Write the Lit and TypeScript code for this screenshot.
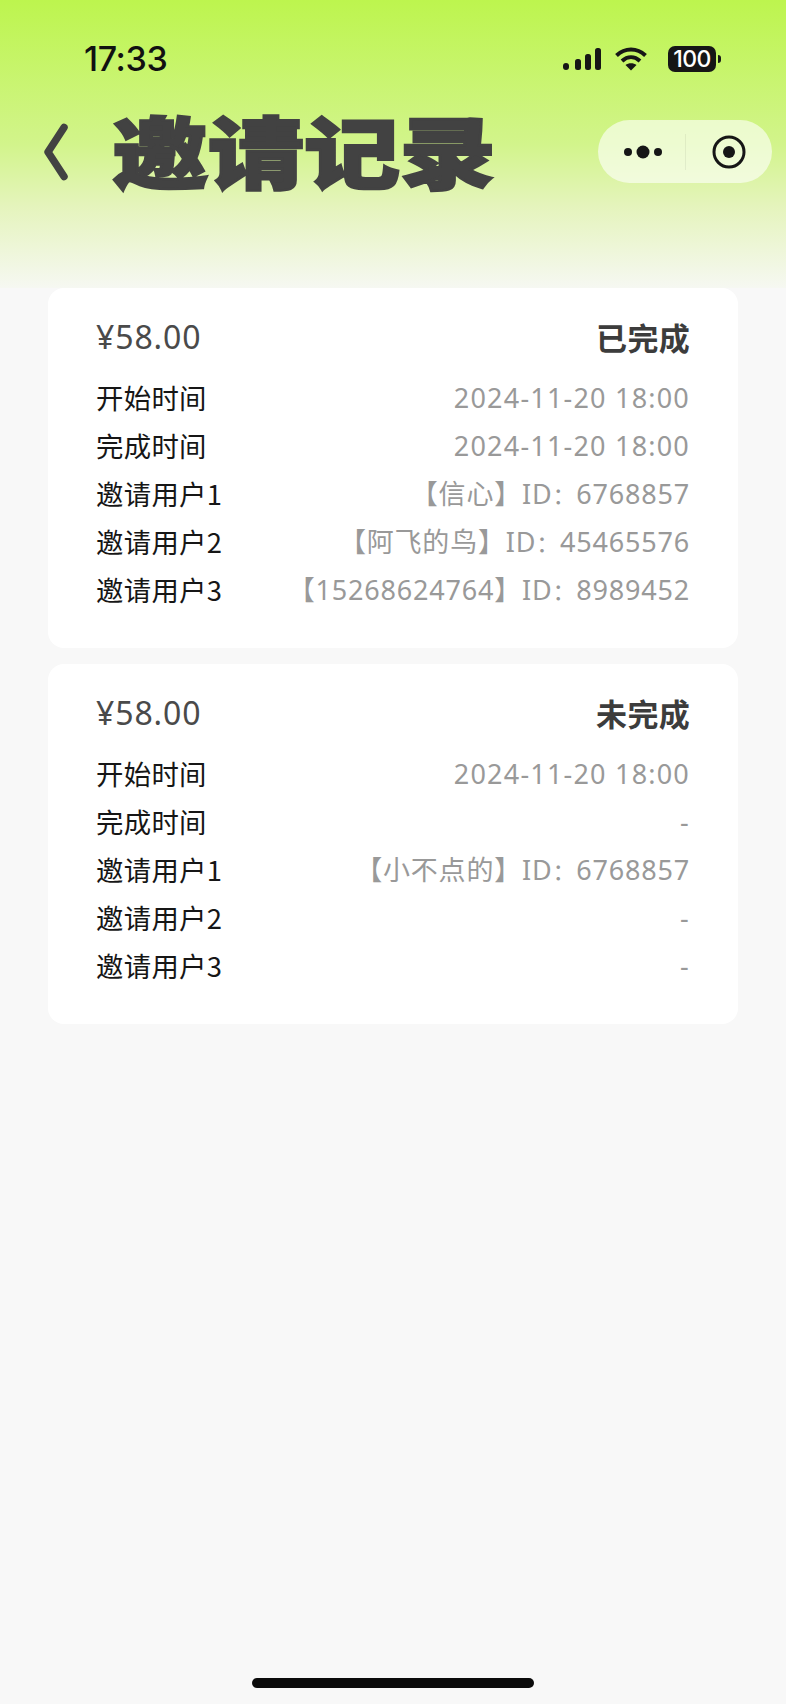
import { LitElement, html, css } from "lit";
import { customElement } from "lit/decorators.js";

type Row = [string, string];
const cards: { status: string; rows: Row[] }[] = [
  {
    status: "已完成",
    rows: [
      ["开始时间", "2024-11-20 18:00"],
      ["完成时间", "2024-11-20 18:00"],
      ["邀请用户1", "【信心】ID：6768857"],
      ["邀请用户2", "【阿飞的鸟】ID：45465576"],
      ["邀请用户3", "【15268624764】ID：8989452"],
    ],
  },
  {
    status: "未完成",
    rows: [
      ["开始时间", "2024-11-20 18:00"],
      ["完成时间", "-"],
      ["邀请用户1", "【小不点的】ID：6768857"],
      ["邀请用户2", "-"],
      ["邀请用户3", "-"],
    ],
  },
];

@customElement("app-root")
export class AppRoot extends LitElement {
  static styles = css`
    :host {
      display: block;
      position: relative;
      height: 1704px;
      overflow: hidden;
      background: #f8f8f8;
      font-family: "Noto Sans CJK SC", "Noto Sans", sans-serif;
    }
    .head {
      height: 288px;
      background: linear-gradient(180deg, #bdf54e 0%, #d2f48b 50%, #e5f4bd 72%, #f6f8f2 100%);
    }
    .status {
      display: flex;
      justify-content: space-between;
      align-items: center;
      height: 40px;
      padding: 39px 0 0 84px;
    }
    .time {
      font-family: Inter, sans-serif;
      font-size: 34px;
      font-weight: 500;
      line-height: 40px;
      color: #111;
      letter-spacing: -0.4px;
    }
    .sicons {
      display: flex;
      align-items: center;
      margin-right: 70px;
    }
    .sicons svg { display: block; }
    .batt {
      position: relative;
      width: 48px;
      height: 26px;
      margin-left: 21px;
      background: #161616;
      border-radius: 7px;
      color: #fff;
      font-family: Inter, sans-serif;
      font-size: 23px;
      font-weight: 500;
      line-height: 26px;
      text-align: center;
      letter-spacing: -0.6px;
    }
    .batt::after {
      content: "";
      position: absolute;
      right: -5px;
      top: 9px;
      width: 3px;
      height: 8px;
      border-radius: 0 3px 3px 0;
      background: #161616;
    }
    .nav {
      display: flex;
      align-items: center;
      height: 63px;
      margin-top: 41px;
      padding: 0 14px 0 44px;
    }
    .back { display: block; flex: none; }
    .title {
      flex: none;
      width: 384px;
      margin: -5px 0 0 40px;
      font-size: 78px;
      font-weight: 900;
      line-height: 63px;
      color: #424242;
      white-space: nowrap;
      -webkit-text-stroke: 2.5px #424242;
      transform: scaleX(1.23);
      transform-origin: left center;
    }
    .capsule {
      display: flex;
      align-items: center;
      width: 174px;
      height: 63px;
      margin-left: auto;
      border-radius: 32px;
      background: rgba(255, 255, 255, 0.6);
    }
    .capsule .half {
      flex: 1;
      display: flex;
      align-items: center;
      justify-content: center;
    }
    .dots { margin-left: 3px; }
    .sep { width: 1px; height: 36px; background: rgba(0, 0, 0, 0.06); }
    .list {
      display: flex;
      flex-direction: column;
      gap: 16px;
      padding: 0 48px;
    }
    .card {
      height: 360px;
      box-sizing: border-box;
      padding: 28px 48px 0;
      background: #fff;
      border-radius: 16px;
    }
    .top {
      display: flex;
      justify-content: space-between;
      align-items: flex-start;
      margin-bottom: 14px;
    }
    .price {
      font-family: "Noto Sans", sans-serif;
      font-size: 32px;
      line-height: 42px;
      color: #4a4a4a;
      letter-spacing: 0.9px;
    }
    .state {
      margin-top: -1px;
      font-size: 31px;
      font-weight: 700;
      line-height: 44px;
      color: #3c3c3c;
      letter-spacing: 0.3px;
    }
    .row {
      display: flex;
      justify-content: space-between;
      height: 48px;
      font-size: 27.4px;
      line-height: 48px;
    }
    .k { color: #161616; letter-spacing: 0.3px; }
    .v {
      position: relative;
      top: 1px;
      color: #999;
      font-size: 27px;
      letter-spacing: 0.8px;
      font-family: "Noto Sans", "Noto Sans CJK SC", sans-serif;
    }
    .v.date { letter-spacing: 1.2px; }
    .colon { font-size: 23px; }
    .home {
      position: absolute;
      left: 252px;
      bottom: 16px;
      width: 282px;
      height: 10px;
      border-radius: 5px;
      background: #0b0b0b;
    }
  `;

  private renderValue(v: string) {
    if (v.includes("ID：")) {
      const [name, id] = v.split("ID：");
      return html`<span class="v">${name}ID<span class="colon">：</span>${id}</span>`;
    }
    return html`<span class="v date">${v}</span>`;
  }

  render() {
    return html`
      <div class="head">
        <div class="status">
          <span class="time">17:33</span>
          <div class="sicons">
            <svg width="38" height="22" viewBox="0 0 38 22" fill="#161616">
              <rect x="0" y="15" width="6" height="7" rx="3"></rect>
              <rect x="12" y="11" width="6" height="11" rx="2.5"></rect>
              <rect x="22" y="6" width="6" height="16" rx="2.5"></rect>
              <rect x="32" y="0" width="6" height="22" rx="2.5"></rect>
            </svg>
            <svg style="margin-left:14px" width="32" height="24" viewBox="0 0 32 24" fill="none" stroke="#161616" stroke-width="4">
              <path d="M1.5 8.5C10 .5 22 .5 30.5 8.5"></path>
              <path d="M7 14c5.500-5 12.500-5 18 0"></path>
              <path d="M16 23.500l-5.500-5.500c3-2.500 8-2.500 11 0z" fill="#161616" stroke="none"></path>
            </svg>
            <div class="batt">100</div>
          </div>
        </div>
        <div class="nav">
          <svg class="back" width="28" height="58" viewBox="0 0 28 58" fill="none" stroke="#424242" stroke-width="7.500" stroke-linecap="round" stroke-linejoin="round">
            <path d="M20 4.500L4 29l16 24.500"></path>
          </svg>
          <div class="title">邀请记录</div>
          <div class="capsule">
            <div class="half">
              <svg class="dots" width="38" height="14" viewBox="0 0 38 14" fill="#161616">
                <circle cx="4" cy="7" r="4"></circle>
                <circle cx="19" cy="7" r="6.500"></circle>
                <circle cx="34" cy="7" r="4"></circle>
              </svg>
            </div>
            <div class="sep"></div>
            <div class="half">
              <svg width="34" height="34" viewBox="0 0 34 34">
                <circle cx="17" cy="17" r="15" fill="none" stroke="#161616" stroke-width="3"></circle>
                <circle cx="17" cy="17" r="6" fill="#161616"></circle>
              </svg>
            </div>
          </div>
        </div>
      </div>
      <div class="list">
        ${cards.map(
          (c) => html`
            <div class="card">
              <div class="top">
                <span class="price">¥58.00</span>
                <span class="state">${c.status}</span>
              </div>
              ${c.rows.map(
                ([k, v]) => html`<div class="row"><span class="k">${k}</span>${this.renderValue(v)}</div>`
              )}
            </div>
          `
        )}
      </div>
      <div class="home"></div>
    `;
  }
}
